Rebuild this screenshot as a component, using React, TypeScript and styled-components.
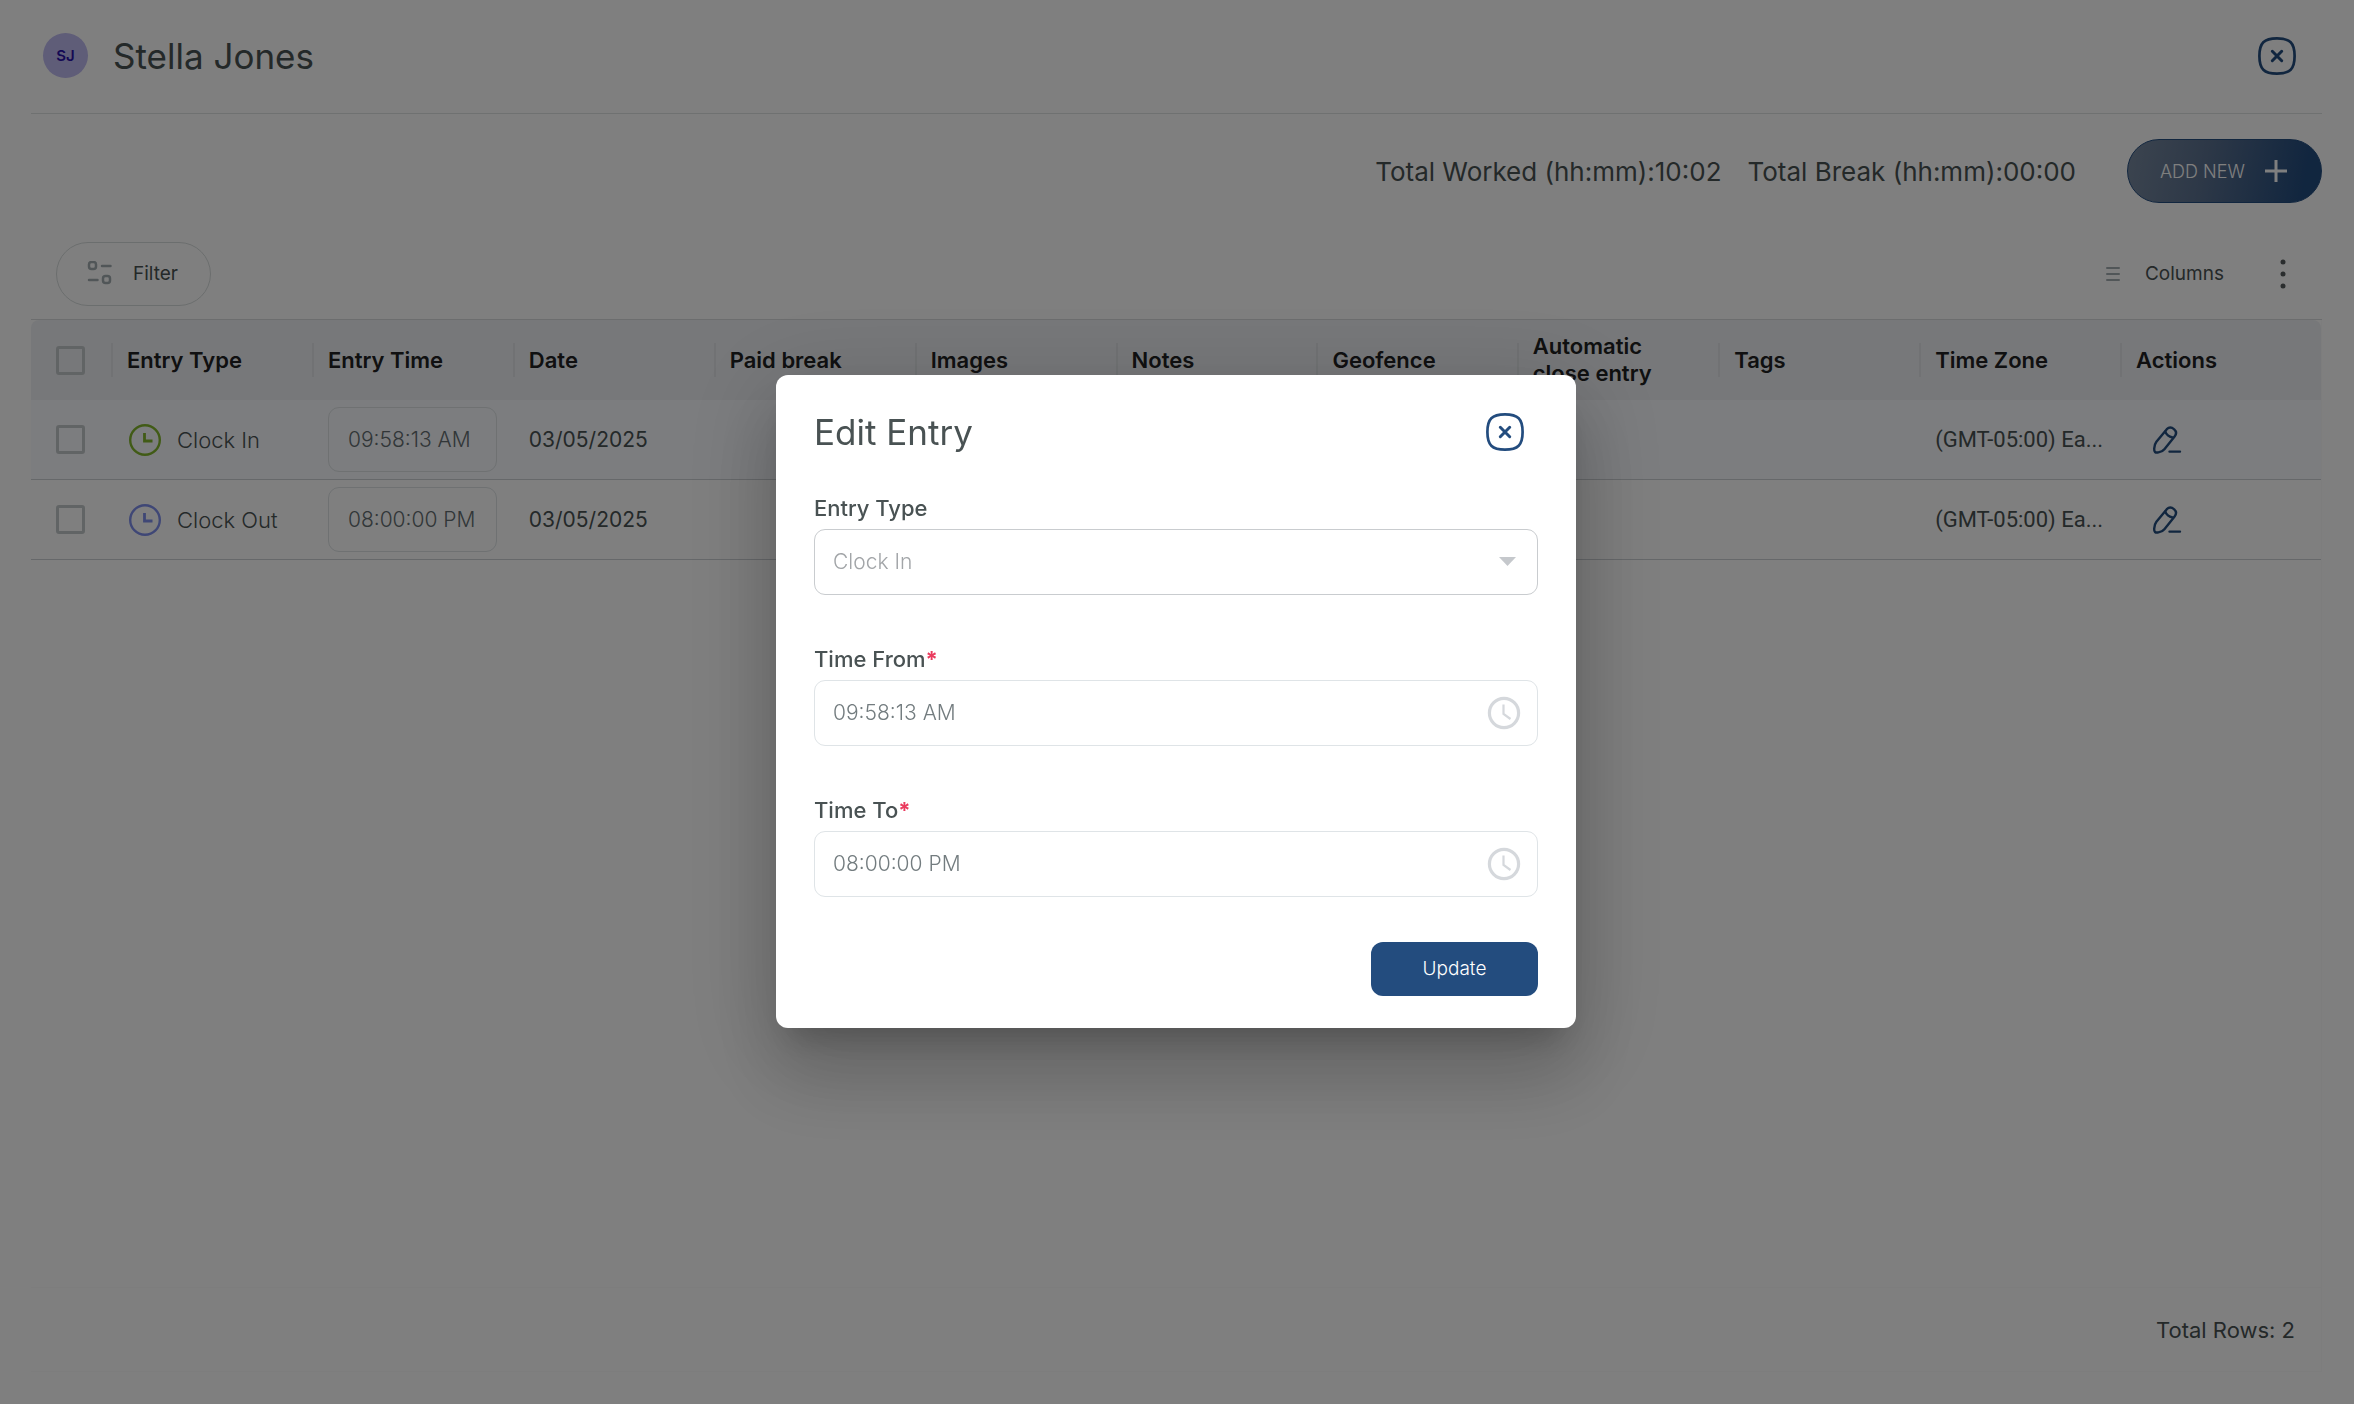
import React from "react";
import styled, { createGlobalStyle } from "styled-components";

const Global = createGlobalStyle`
  *, *::before, *::after { box-sizing: border-box; }
  body { margin: 0; background: #fff; font-family: Inter, "Liberation Sans", sans-serif; color: #495253; }
  button, input, select { font-family: inherit; }
  h1, h2, p { margin: 0; font-weight: 400; }
`;

const Page = styled.main`
  min-height: 100vh;
  padding: 0 32px 32px 31px;
  display: flex;
  flex-direction: column;
`;

const Header = styled.header`
  display: flex;
  align-items: center;
  gap: 25px;
  height: 114px;
  padding: 0 26px 2px 12px;
  border-bottom: 1px solid #dfe3e3;
`;

const Avatar = styled.span`
  display: grid;
  place-items: center;
  width: 45px;
  height: 45px;
  border-radius: 50%;
  background: #bebaf0;
  color: #2a12a8;
  font-size: 15px;
  font-weight: 600;
`;

const PageTitle = styled.h1`
  flex: 1;
  font-size: 35px;
  line-height: 44px;
`;

const IconButton = styled.button`
  display: grid;
  place-items: center;
  padding: 0;
  border: 0;
  background: none;
  color: #234c7e;
`;

const Summary = styled.section`
  display: flex;
  align-items: center;
  justify-content: flex-end;
  gap: 26px;
  height: 114px;
  font-size: 26px;
  font-weight: 300;
`;

const AddButton = styled.button`
  display: flex;
  align-items: center;
  justify-content: space-between;
  width: 195px;
  height: 64px;
  margin-left: 25px;
  padding: 0 33px 0 32px;
  border: 1px solid #234c7e;
  border-radius: 32px;
  background: linear-gradient(100deg, #78899f, #5a708f 40%, #234c7e 90%);
  color: #fff;
  font-size: 18px;
  font-weight: 300;
`;

const Toolbar = styled.section`
  display: flex;
  align-items: center;
  justify-content: space-between;
  height: 92px;
  padding: 0 24px 0 25px;
  border-bottom: 1px solid #d8dadd;
`;

const FilterButton = styled.button`
  display: flex;
  align-items: center;
  gap: 20px;
  width: 155px;
  height: 64px;
  padding: 0 30px;
  border: 1px solid #d7dcdc;
  border-radius: 32px;
  background: #fff;
  color: #495253;
  font-size: 19px;
`;

const ToolGroup = styled.div`
  display: flex;
  align-items: center;
  gap: 44px;
`;

const ColumnsButton = styled.button`
  display: flex;
  align-items: center;
  gap: 24px;
  padding: 0;
  border: 0;
  background: none;
  color: #495253;
  font-size: 19px;
`;

const GridPanel = styled.section`
  flex: 1;
  display: flex;
  flex-direction: column;
  justify-content: space-between;
  border: solid #fafafa;
  border-width: 0 1px 1px 0;
`;

const Table = styled.table`
  width: 100%;
  table-layout: fixed;
  border-collapse: separate;
  border-spacing: 0;
`;

const HeadCell = styled.th<{ $check?: boolean }>`
  width: ${(p) => (p.$check ? "80px" : "auto")};
  height: 80px;
  padding: ${(p) => (p.$check ? "0 25px" : "0 16px 0 0")};
  background: #eff1f4;
  color: #202122;
  font-size: 22px;
  line-height: 27px;
  font-weight: 600;
  text-align: left;
  vertical-align: middle;
  &:first-child { border-top-left-radius: 8px; }
  &:last-child { border-top-right-radius: 8px; }
`;

const HeadLabel = styled.div`
  display: flex;
  align-items: center;
  height: 54px;
  &::before {
    content: "";
    align-self: center;
    width: 2px;
    height: 34px;
    margin-right: 14px;
    background: #e2e5e8;
  }
`;

const Row = styled.tr<{ $active?: boolean }>`
  background: ${(p) => (p.$active ? "#f8fafe" : "#fff")};
`;

const Cell = styled.td<{ $check?: boolean; $size?: number; $font?: string }>`
  height: 80px;
  padding: ${(p) => (p.$check ? "0 25px" : "0 16px")};
  border-bottom: 1px solid #cdd1d5;
  font-family: ${(p) => p.$font || "inherit"};
  font-size: ${(p) => p.$size || 22}px;
  line-height: 30px;
  white-space: nowrap;
  overflow: hidden;
  text-overflow: ellipsis;
  vertical-align: middle;
`;

const Check = styled.input`
  appearance: none;
  display: block;
  width: 29px;
  height: 29px;
  margin: 0;
  border: 3px solid #c3c8ca;
  border-radius: 3px;
`;

const EntryType = styled.div`
  display: flex;
  align-items: center;
  gap: 16px;
  font-weight: 300;
`;

const RowTime = styled.input`
  display: block;
  width: 169px;
  height: 65px;
  padding: 0 8px 0 19px;
  border: 1px solid #dee3e5;
  border-radius: 11px;
  background: transparent;
  color: #636d70;
  font-size: 21px;
  font-weight: 300;
`;

const EditButton = styled(IconButton)`
  width: 32px;
  height: 32px;
  margin-left: 15px;
`;

const Footer = styled.footer`
  display: flex;
  align-items: center;
  justify-content: flex-end;
  height: 84px;
  padding-right: 26px;
  border-top: 1px solid #fafafa;
  font-size: 22px;
`;

const Overlay = styled.div`
  position: fixed;
  inset: 0;
  display: grid;
  place-items: center;
  padding: 0 2px 2px 0;
  background: rgba(0, 0, 0, 0.5);
`;

const Dialog = styled.form`
  width: 800px;
  padding: 32px 38px;
  border-radius: 12px;
  background: #fff;
  box-shadow: 0 22px 30px -14px rgba(0, 0, 0, 0.2), 0 48px 76px 6px rgba(0, 0, 0, 0.14), 0 18px 92px 16px rgba(0, 0, 0, 0.12);
`;

const DialogHead = styled.div`
  display: flex;
  align-items: center;
  justify-content: space-between;
  height: 50px;
  margin-bottom: 32px;
  padding-right: 14px;
`;

const DialogTitle = styled.h2`
  font-size: 35px;
  line-height: 44px;
`;

const Field = styled.div`
  height: 151px;
`;

const Label = styled.label`
  display: block;
  height: 40px;
  font-size: 22px;
  line-height: 38px;
  font-weight: 500;
`;

const Required = styled.span`
  color: #ea3b5e;
  font-weight: 700;
`;

const Box = styled.div`
  display: grid;
  align-items: center;
  & > * { grid-area: 1 / 1; }
  & > svg { justify-self: end; pointer-events: none; }
`;

const Select = styled.select`
  appearance: none;
  width: 100%;
  height: 66px;
  padding: 0 18px;
  border: 1px solid #c9cccf;
  border-radius: 11px;
  background: #fff;
  color: #a2a5a8;
  opacity: 1;
  font-size: 21px;
  font-weight: 300;
`;

const TimeInput = styled.input`
  width: 100%;
  height: 66px;
  padding: 0 18px;
  border: 1px solid #dfe4e7;
  border-radius: 11px;
  background: #fff;
  color: #737c7f;
  font-size: 21px;
  font-weight: 300;
`;

const Caret = styled.svg`
  margin-right: 22px;
`;

const FieldClock = styled.svg`
  margin-right: 17px;
`;

const Actions = styled.div`
  display: flex;
  justify-content: flex-end;
`;

const UpdateButton = styled.button`
  width: 167px;
  height: 54px;
  border: 0;
  border-radius: 12px;
  background: #234c7e;
  color: #fff;
  font-size: 19px;
  font-weight: 300;
`;

const CloseIcon = () => (
  <svg width="38" height="38" viewBox="0 0 38 38" fill="none" stroke="currentColor" strokeLinecap="round">
    <path d="M19 1.400C32 1.400 36.600 6 36.600 19S32 36.600 19 36.600 1.400 32 1.400 19 6 1.400 19 1.400Z" strokeWidth="2.700" />
    <path d="M14.300 14.300l9.400 9.400M23.700 14.300l-9.400 9.400" strokeWidth="3" />
  </svg>
);

const EntryClock = ({ color }: { color: string }) => (
  <svg width="34" height="34" viewBox="0 0 34 34" fill="none" stroke={color}>
    <circle cx="18" cy="17" r="14.800" strokeWidth="2.400" />
    <path d="M17.500 10v8h8" strokeWidth="2.800" />
  </svg>
);

const PencilIcon = () => (
  <svg width="32" height="32" viewBox="0 0 32 32" fill="none" stroke="currentColor" strokeWidth="2.400" strokeLinecap="round" strokeLinejoin="round">
    <path d="M15.800 5.200 5.400 17.800C4 19.600 3.400 21 3.200 24.600c-.2 3.400 1 4.400 4.200 3.800 2.900-.5 4.400-1.200 6-3.200L23.600 12.400c1.900-2.400 1.900-5-.4-7.100-2.300-2-5.200-2.300-7.400-.1Z" />
    <path d="M14.200 7.500c1.200 3.200 3.800 5.200 7.300 6M18.500 27.600h10.500" />
  </svg>
);

const headings = ["Entry Type", "Entry Time", "Date", "Paid break", "Images", "Notes", "Geofence", "Automatic close entry", "Tags", "Time Zone", "Actions"];

const entries = [
  { type: "Clock In", time: "09:58:13 AM", date: "03/05/2025", color: "#82b62d" },
  { type: "Clock Out", time: "08:00:00 PM", date: "03/05/2025", color: "#7f8fec" },
];

export default function App() {
  return (
    <>
      <Global />
      <Page>
        <Header>
          <Avatar>SJ</Avatar>
          <PageTitle>Stella Jones</PageTitle>
          <IconButton aria-label="Close"><CloseIcon /></IconButton>
        </Header>
        <Summary>
          <p>Total Worked (hh:mm):10:02</p>
          <p>Total Break (hh:mm):00:00</p>
          <AddButton>
            ADD NEW
            <svg width="24" height="24" viewBox="0 0 24 24" stroke="currentColor" strokeWidth="3"><path d="M12 1v22M1 12h22" /></svg>
          </AddButton>
        </Summary>
        <Toolbar>
          <FilterButton>
            <svg width="26" height="26" viewBox="0 0 26 26" fill="none" stroke="#a3adb1" strokeWidth="2.500" strokeLinecap="round">
              <rect x="2" y="1" width="7" height="7" rx="2.500" />
              <rect x="16" y="15" width="7" height="7" rx="2.500" />
              <path d="M15 5h8.500M2 19h8.500" />
            </svg>
            Filter
          </FilterButton>
          <ToolGroup>
            <ColumnsButton>
              <svg width="16" height="16" viewBox="0 0 16 16" stroke="#a3adb1" strokeWidth="2" strokeLinecap="round"><path d="M2 2h12M2 8h12M2 14h12" /></svg>
              Columns
            </ColumnsButton>
            <IconButton aria-label="More options">
              <svg width="30" height="30" viewBox="0 0 30 30" fill="#555a5c"><circle cx="15" cy="3" r="2.500" /><circle cx="15" cy="15" r="2.500" /><circle cx="15" cy="27" r="2.500" /></svg>
            </IconButton>
          </ToolGroup>
        </Toolbar>
        <GridPanel>
          <Table>
            <thead>
              <tr>
                <HeadCell $check><Check type="checkbox" aria-label="Select all rows" /></HeadCell>
                {headings.map((h) => <HeadCell key={h}><HeadLabel>{h}</HeadLabel></HeadCell>)}
              </tr>
            </thead>
            <tbody>
              {entries.map((e, i) => (
                <Row key={e.type} $active={i === 0}>
                  <Cell $check><Check type="checkbox" aria-label={`Select ${e.type}`} /></Cell>
                  <Cell><EntryType><EntryClock color={e.color} />{e.type}</EntryType></Cell>
                  <Cell><RowTime aria-label={`${e.type} time`} defaultValue={e.time} /></Cell>
                  <Cell $size={21}>{e.date}</Cell>
                  <Cell /><Cell /><Cell /><Cell /><Cell /><Cell />
                  <Cell $font="Roboto, sans-serif">(GMT-05:00) Ea...</Cell>
                  <Cell><EditButton aria-label={`Edit ${e.type}`}><PencilIcon /></EditButton></Cell>
                </Row>
              ))}
            </tbody>
          </Table>
          <Footer>Total Rows: 2</Footer>
        </GridPanel>
      </Page>
      <Overlay>
        <Dialog role="dialog" aria-modal="true" aria-labelledby="dialog-title" onSubmit={(e) => e.preventDefault()}>
          <DialogHead>
            <DialogTitle id="dialog-title">Edit Entry</DialogTitle>
            <IconButton type="button" aria-label="Close dialog"><CloseIcon /></IconButton>
          </DialogHead>
          <Field>
            <Label htmlFor="entry-type">Entry Type</Label>
            <Box>
              <Select id="entry-type" disabled defaultValue="Clock In"><option>Clock In</option></Select>
              <Caret width="17" height="9" viewBox="0 0 17 9" fill="#c5c8cc"><path d="M0 0h17L8.500 9Z" /></Caret>
            </Box>
          </Field>
          {[["from", "Time From", "09:58:13 AM"], ["to", "Time To", "08:00:00 PM"]].map(([id, label, value]) => (
            <Field key={id}>
              <Label htmlFor={id}>{label}<Required>*</Required></Label>
              <Box>
                <TimeInput id={id} defaultValue={value} />
                <FieldClock width="34" height="34" viewBox="0 0 34 34" fill="none" stroke="#d5d8dc">
                  <circle cx="17" cy="17" r="14.600" strokeWidth="3.200" />
                  <path d="M16.500 8.500V18l7 5" strokeWidth="2.200" />
                </FieldClock>
              </Box>
            </Field>
          ))}
          <Actions><UpdateButton type="submit">Update</UpdateButton></Actions>
        </Dialog>
      </Overlay>
    </>
  );
}
